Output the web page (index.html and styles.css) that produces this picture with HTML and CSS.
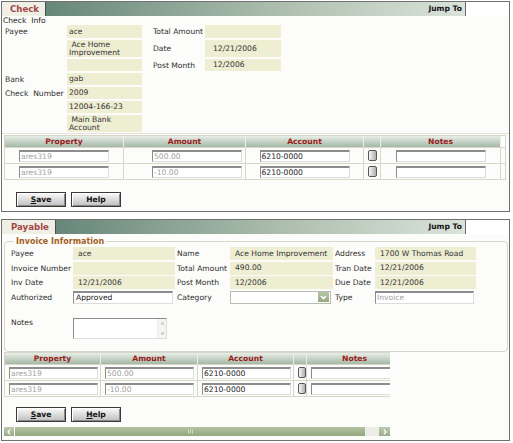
FILE: index.html
```html
<!DOCTYPE html>
<html lang="en">
<head>
<meta charset="utf-8">
<title>Check / Payable</title>
<link rel="stylesheet" href="styles.css">
</head>
<body>
<div class="page">

  <section class="panel">
    <header class="panel-head">
      <div class="tab tab-check">Check</div>
      <div class="head-bar"><span class="jump">Jump To</span><span class="jump-box"></span></div>
    </header>
    <div class="title">Check&nbsp; Info</div>
    <div class="check-grid">
      <div class="lbl c1">Payee</div><div class="v">ace</div><div></div><div class="lbl r">Total Amount</div><div class="v r"></div>
      <div class="c1"></div><div class="v">&nbsp;Ace Home Improvement</div><div></div><div class="lbl r">Date</div><div class="v r">12/21/2006</div>
      <div class="c1"></div><div class="v"></div><div></div><div class="lbl r">Post Month</div><div class="v r">12/2006</div>
      <div class="lbl c1">Bank</div><div class="v">gab</div>
      <div class="lbl c1">Check&nbsp; Number</div><div class="v">2009</div>
      <div class="c1"></div><div class="v">12004-166-23</div>
      <div class="c1"></div><div class="v">&nbsp;Main Bank Account</div>
    </div>
    <div class="sep"></div>
    <table class="lines lines-1">
      <colgroup>
        <col class="w119"><col class="w122"><col class="w118"><col class="w17"><col class="w120"><col class="w4">
      </colgroup>
      <thead>
        <tr><th><div class="hcell">Property</div></th><th><div class="hcell">Amount</div></th><th><div class="hcell">Account</div></th><th><div class="hcell"></div></th><th><div class="hcell">Notes</div></th><th class="blank"><div class="hcell"></div></th></tr>
      </thead>
      <tbody>
        <tr>
          <td><div class="cell"><span class="inp">ares319</span></div></td>
          <td><div class="cell amt"><span class="inp">500.00</span></div></td>
          <td><div class="cell"><span class="inp on">6210-0000</span></div></td>
          <td><div class="cell"><span class="sq"></span></div></td>
          <td><div class="cell"><span class="inp on"></span></div></td>
          <td><div class="cell"></div></td>
        </tr>
        <tr>
          <td><div class="cell"><span class="inp">ares319</span></div></td>
          <td><div class="cell amt"><span class="inp">-10.00</span></div></td>
          <td><div class="cell"><span class="inp on">6210-0000</span></div></td>
          <td><div class="cell"><span class="sq"></span></div></td>
          <td><div class="cell"><span class="inp on"></span></div></td>
          <td><div class="cell"></div></td>
        </tr>
      </tbody>
    </table>
    <div class="actions actions-1">
      <button class="btn" type="button"><u>S</u>ave</button>
      <button class="btn" type="button">Help</button>
    </div>
  </section>

  <section class="panel panel-2">
    <header class="panel-head">
      <div class="tab tab-payable">Payable</div>
      <div class="head-bar"><span class="jump">Jump To</span><span class="jump-box"></span></div>
    </header>
    <fieldset class="invoice">
      <legend>Invoice Information</legend>
      <div class="inv-grid">
        <div class="lbl">Payee</div><div class="v">ace</div>
        <div class="lbl p">Name</div><div class="v">Ace Home Improvement</div>
        <div class="lbl p">Address</div><div class="v">1700 W Thomas Road</div>

        <div class="lbl">Invoice Number</div><div class="v"></div>
        <div class="lbl p">Total Amount</div><div class="v">490.00</div>
        <div class="lbl p">Tran Date</div><div class="v">12/21/2006</div>

        <div class="lbl">Inv Date</div><div class="v">12/21/2006</div>
        <div class="lbl p">Post Month</div><div class="v">12/2006</div>
        <div class="lbl p">Due Date</div><div class="v">12/21/2006</div>

        <div class="lbl">Authorized</div><div class="fld"><span class="inp on auth">Approved</span></div>
        <div class="lbl p">Category</div>
        <div class="fld">
          <span class="sel"><span class="sel-arrow"><svg width="7" height="5" viewBox="0 0 7 5"><path d="M1 1 L3.5 3.6 L6 1" fill="none" stroke="#ffffff" stroke-width="1.5"/></svg></span></span>
        </div>
        <div class="lbl p">Type</div><div class="fld"><span class="inp type">Invoice</span></div>
      </div>
      <div class="notes-row">
        <div class="lbl nlbl">Notes</div>
        <div class="ta">
          <span class="ta-bar">
            <svg width="5" height="4" viewBox="0 0 5 4"><path d="M0.5 3.5 L2.5 0.8 L4.5 3.5 Z" fill="#c4c4c4"/></svg>
            <svg width="5" height="4" viewBox="0 0 5 4"><path d="M0.5 0.5 L2.5 3.2 L4.5 0.5 Z" fill="#c4c4c4"/></svg>
          </span>
        </div>
      </div>
    </fieldset>

    <div class="scroll-area">
      <table class="lines lines-2">
        <colgroup>
          <col class="w96"><col class="w97"><col class="w96"><col class="w13"><col class="w96"><col class="w4">
        </colgroup>
        <thead>
          <tr><th><div class="hcell">Property</div></th><th><div class="hcell">Amount</div></th><th><div class="hcell">Account</div></th><th><div class="hcell"></div></th><th><div class="hcell">Notes</div></th><th class="blank"><div class="hcell"></div></th></tr>
        </thead>
        <tbody>
          <tr>
            <td><div class="cell"><span class="inp">ares319</span></div></td>
            <td><div class="cell"><span class="inp">500.00</span></div></td>
            <td><div class="cell"><span class="inp on">6210-0000</span></div></td>
            <td><div class="cell"><span class="sq"></span></div></td>
            <td><div class="cell"><span class="inp on"></span></div></td>
            <td><div class="cell"></div></td>
          </tr>
          <tr>
            <td><div class="cell"><span class="inp">ares319</span></div></td>
            <td><div class="cell"><span class="inp">-10.00</span></div></td>
            <td><div class="cell"><span class="inp on">6210-0000</span></div></td>
            <td><div class="cell"><span class="sq"></span></div></td>
            <td><div class="cell"><span class="inp on"></span></div></td>
            <td><div class="cell"></div></td>
          </tr>
        </tbody>
      </table>
      <div class="actions actions-2">
        <button class="btn" type="button"><u>S</u>ave</button>
        <button class="btn" type="button"><u>H</u>elp</button>
      </div>
    </div>
    <div class="hscroll">
      <span class="sb-btn sb-left"><svg width="4" height="6" viewBox="0 0 4 6"><path d="M3.2 0.6 L0.9 3 L3.2 5.4" fill="none" stroke="#ffffff" stroke-width="1.3"/></svg></span>
      <span class="sb-thumb"><svg width="5" height="5" viewBox="0 0 5 5"><path d="M0.5 0.5 V4.5 M2.5 0.5 V4.5 M4.5 0.5 V4.5" stroke="#d2dcc6" stroke-width="1"/></svg></span>
      <span class="sb-track"></span>
      <span class="sb-btn sb-right"><svg width="4" height="6" viewBox="0 0 4 6"><path d="M0.8 0.6 L3.1 3 L0.8 5.4" fill="none" stroke="#ffffff" stroke-width="1.3"/></svg></span>
    </div>
  </section>

</div>
</body>
</html>
```

FILE: styles.css
```css
* { box-sizing: border-box; }

html, body { margin: 0; padding: 0; background: #ffffff; }

body {
  font-family: "DejaVu Sans", Verdana, sans-serif;
  font-size: 7.6px;
  line-height: 9px;
  color: #2e2e2e;
}

.page {
  display: flex;
  flex-direction: column;
  gap: 7px;
  padding: 1px 0 0 1px;
}

.panel {
  width: 509px;
  border: 1px solid #707070;
  background: #fcfcfa;
}

/* header with tab */
.panel-head { display: flex; height: 14px; }

.tab {
  flex: none;
  background: #efefe6;
  color: #a54646;
  font-weight: bold;
  font-size: 8.6px;
  line-height: 14px;
  padding-left: 8px;
  border-right: 1px solid #4e4e4e;
}
.tab-check { width: 44px; }
.tab-payable { width: 54px; padding-left: 9px; }

.head-bar {
  flex: 1;
  display: flex;
  justify-content: flex-end;
  background: linear-gradient(to right, #67877a, #aabcab 48%, #e6ece6);
}
.jump {
  font-weight: bold;
  color: #141414;
  line-height: 14px;
  padding-right: 3px;
}
.jump-box {
  width: 44px;
  background: #ffffff;
  border-left: 1px solid #6a6a6a;
}

.title { height: 9px; padding-left: 1px; color: #1e1e1e; }

/* check form */
.check-grid {
  display: grid;
  grid-template-columns: 64px 75px 11px 52px 76px;
  grid-template-rows: 13px 17px 12px 12px 12px 12px 17px;
  row-gap: 2px;
  margin-left: 1px;
}
.c1 { grid-column: 1; }

.lbl {
  display: flex;
  align-items: center;
  padding-left: 2px;
  white-space: nowrap;
}
.lbl.r { padding-left: 0; }

.v {
  display: flex;
  align-items: center;
  background: #eeeed3;
  padding: 0 2px;
  line-height: 8px;
  color: #333333;
  white-space: normal;
}
.v.r { padding-left: 8px; }

.sep { height: 1px; margin-top: 1px; background: #e2e2da; }

/* line tables */
.lines {
  border-collapse: separate;
  border-spacing: 0;
  table-layout: fixed;
  border: 1px solid #d7d7c9;
}
.lines th {
  padding: 0;
  background: linear-gradient(#e8eee7, #a5b8a5);
  color: #981c1c;
  font-weight: bold;
  border-right: 1px solid #eeeee6;
  border-bottom: 1px solid #d7d7c9;
}
.lines th.blank { background: #ffffff; border-right: 0; }
.hcell { height: 11px; line-height: 11px; text-align: center; }

.lines td {
  padding: 0;
  border-right: 1px solid #d7d7c9;
  border-bottom: 1px solid #d7d7c9;
}
.lines td:last-child { border-right: 0; }
.lines tbody tr:last-child td { border-bottom: 0; }

.cell { display: flex; align-items: center; height: 15px; }

.lines-1 { width: 502px; margin: 1px 0 0 2px; }
.lines-1 .cell { justify-content: center; }
.lines-1 .cell.amt { justify-content: flex-end; padding-right: 3px; }

.lines-2 { width: 404px; }
.lines-2 .cell { padding-left: 4px; }

.w119 { width: 119px; }
.w122 { width: 122px; }
.w118 { width: 118px; }
.w17 { width: 17px; }
.w120 { width: 120px; }
.w4 { width: 4px; }
.w96 { width: 96px; }
.w97 { width: 97px; }
.w13 { width: 13px; }

.inp {
  display: block;
  flex: none;
  width: 90px;
  height: 12px;
  background: #ffffff;
  border-style: solid;
  border-width: 2px 1px 1px 1px;
  border-color: #8c8c8c #dddddd #dddddd #8c8c8c;
  padding-left: 1px;
  line-height: 9px;
  color: #a0a0a0;
  white-space: nowrap;
  overflow: hidden;
}
.inp.on { color: #222222; }
.lines-2 .inp { width: 89px; }

.sq {
  display: block;
  width: 9px;
  height: 11px;
  border: 1px solid #575757;
  border-radius: 2px;
  background: linear-gradient(to right, #f6f6f6, #aeaeae);
}
.lines-2 .sq { width: 8px; }

/* buttons */
.actions { display: flex; gap: 5px; }
.actions-1 { padding: 12px 0 4px 14px; }
.actions-2 { padding: 10px 0 0 12px; }

.btn {
  width: 50px;
  height: 15px;
  padding: 0;
  margin: 0;
  border: 1px solid #3a3a3a;
  border-radius: 0;
  background: linear-gradient(#fbfbfb, #bebebe);
  box-shadow: inset 1px 1px 0 #ffffff, inset -1px -1px 0 #8a8a8a;
  font-family: inherit;
  font-size: 7.6px;
  font-weight: bold;
  line-height: 13px;
  color: #111111;
  text-align: center;
}
.btn u { text-decoration: underline; }

/* invoice fieldset */
.invoice {
  margin: 3px 1px 0 2px;
  padding: 0 0 12px 0;
  border: 1px solid #d6d6cc;
  border-radius: 4px;
  min-width: 0;
}
.invoice legend {
  margin-left: 9px;
  padding: 0 2px;
  font-size: 8px;
  line-height: 9px;
  font-weight: bold;
  color: #a3611f;
}

.inv-grid {
  display: grid;
  grid-template-columns: 62px 102px 55px 103px 42px 101px;
  grid-auto-rows: 13px;
  row-gap: 1.5px;
  margin: 1px 0 0 6px;
}
.inv-grid .lbl { padding-left: 0; }
.inv-grid .lbl.p { padding-left: 2px; }
.inv-grid .v { padding-left: 5px; white-space: nowrap; }

.fld { display: flex; align-items: center; }
.inp.auth { width: 100px; height: 13px; padding-left: 2px; }
.inp.type { width: 99px; height: 13px; padding-left: 1px; }

.sel {
  display: flex;
  justify-content: flex-end;
  align-items: center;
  width: 101px;
  height: 13px;
  background: #ffffff;
  border: 1px solid #b6beb0;
  padding-right: 1px;
}
.sel-arrow {
  display: flex;
  align-items: center;
  justify-content: center;
  width: 11px;
  height: 10px;
  background: linear-gradient(#b7c5a7, #94a681);
}

.notes-row { display: flex; margin: 14.5px 0 0 6px; }
.nlbl { width: 62px; align-items: flex-start; padding-left: 0; }

.ta {
  display: flex;
  justify-content: flex-end;
  width: 94px;
  height: 21px;
  background: #ffffff;
  border-style: solid;
  border-width: 1px;
  border-color: #8c8c8c #dddddd #dddddd #8c8c8c;
}
.ta-bar {
  display: flex;
  flex-direction: column;
  justify-content: space-between;
  align-items: center;
  width: 9px;
  padding: 2px 0;
  background: #f4f4f2;
  border-left: 1px solid #ececea;
}

/* horizontally scrolled lines */
.scroll-area {
  width: 386px;
  margin: 0 0 0 2px;
  overflow: hidden;
}

.hscroll {
  display: flex;
  width: 386px;
  height: 9px;
  margin: 5px 0 4px 2px;
}
.sb-btn {
  flex: none;
  display: flex;
  align-items: center;
  justify-content: center;
  background: linear-gradient(#bcc8b0, #9aab89);
}
.sb-left { width: 10px; }
.sb-right { width: 11px; }
.sb-thumb {
  flex: none;
  display: flex;
  align-items: center;
  justify-content: center;
  width: 350px;
  margin-left: 1px;
  background: linear-gradient(#b2c3a0, #92a67f);
}
.sb-track { flex: 1; background: #eceee6; }
```
